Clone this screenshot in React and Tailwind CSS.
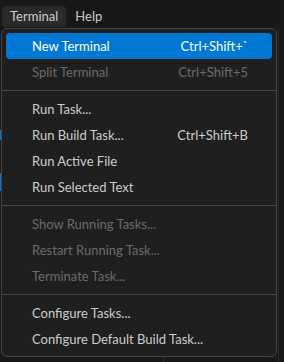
import React from "react";

const Item = ({ label, shortcut, active, disabled }) => (
  <div
    className={
      "flex h-[26px] items-center justify-between rounded-[4px] pl-[26px] pr-[24px] " +
      (active ? "bg-[#0078d4] text-white" : disabled ? "text-[#6b6b6b]" : "text-[#cccccc]")
    }
  >
    <span>{label}</span>
    {shortcut && (
      <span className={active ? "text-white" : disabled ? "text-[#6b6b6b]" : "text-[#cccccc]"}>
        {shortcut}
      </span>
    )}
  </div>
);

const Sep = () => (
  <div className="py-[5px] -mx-[4px]">
    <div className="h-px bg-[#454545]" />
  </div>
);

export default function App() {
  return (
    <div
      className="relative h-[362px] w-[284px] overflow-hidden bg-[#181818] text-[13px] leading-none"
      style={{ fontFamily: 'Lato, "Liberation Sans", Arial, sans-serif' }}
    >
      <div className="flex h-[28px] items-start pt-[6px] pl-[2px] text-[#cccccc]">
        <div className="flex h-[21px] items-center rounded-[4px] bg-[#2a2a2a] px-[8px]">Terminal</div>
        <div className="flex h-[21px] items-center px-[9px]">Help</div>
      </div>
      <div className="absolute left-0 top-[130px] h-[10px] w-px bg-[#0078d4]" />
      <div className="absolute left-0 top-[173px] h-[18px] w-px bg-[#0078d4]" />
      <div className="absolute left-[278px] top-[28px] h-[334px] w-px bg-[#2b2b2b]" />
      <div className="absolute left-[163px] top-[355px] h-[7px] w-px bg-[#2b2b2b]" />
      <div className="relative ml-[1px] w-[276px] rounded-[6px] border border-[#454545] bg-[#1f1f1f] p-[4px]">
        <Item label="New Terminal" shortcut="Ctrl+Shift+`" active />
        <Item label="Split Terminal" shortcut="Ctrl+Shift+5" disabled />
        <Sep />
        <Item label="Run Task..." />
        <Item label="Run Build Task..." shortcut="Ctrl+Shift+B" />
        <Item label="Run Active File" />
        <Item label="Run Selected Text" />
        <Sep />
        <Item label="Show Running Tasks..." disabled />
        <Item label="Restart Running Task..." disabled />
        <Item label="Terminate Task..." disabled />
        <Sep />
        <Item label="Configure Tasks..." />
        <Item label="Configure Default Build Task..." />
      </div>
    </div>
  );
}
